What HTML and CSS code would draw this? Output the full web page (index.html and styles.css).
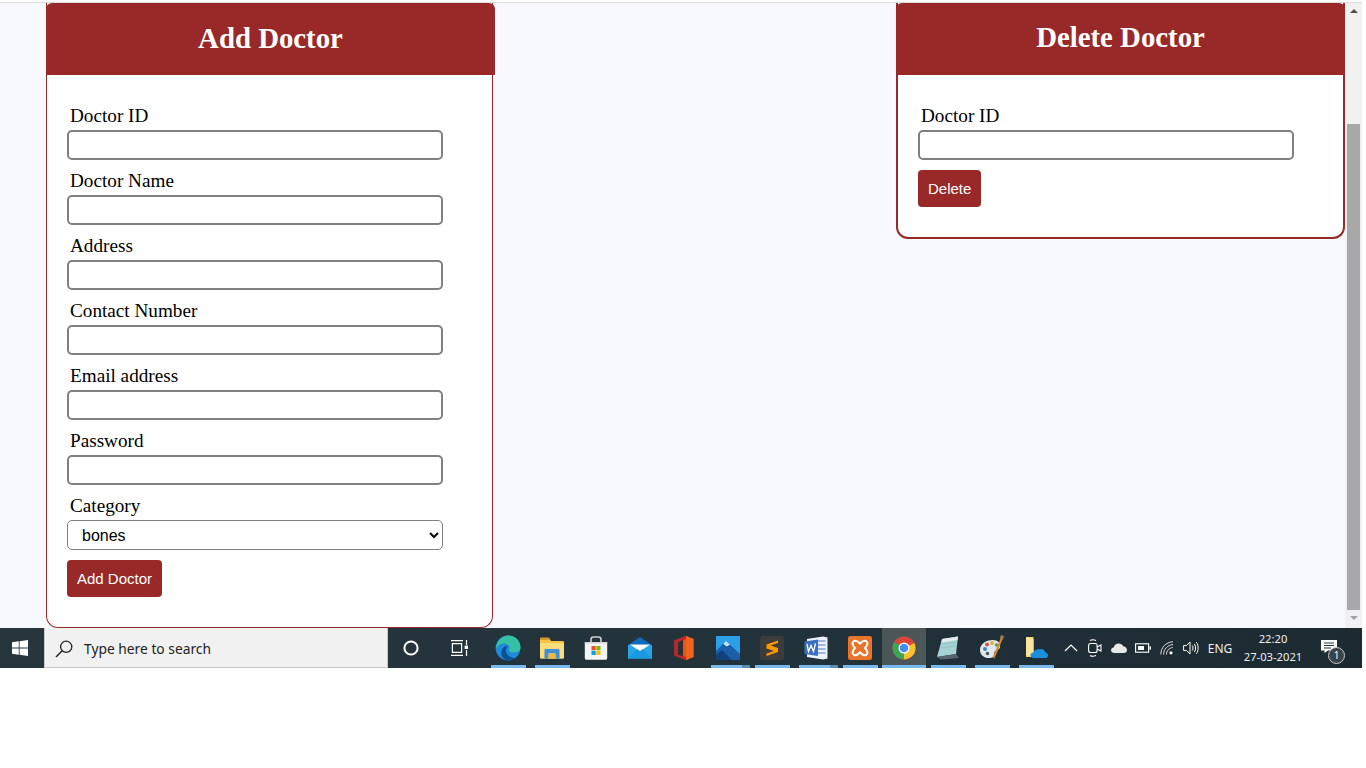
FILE: index.html
```html
<!DOCTYPE html>
<html lang="en">
<head>
<meta charset="UTF-8">
<meta name="viewport" content="width=device-width, initial-scale=1.0">
<title>Manage Doctors</title>
<link rel="stylesheet" href="styles.css">
</head>
<body>
<div class="screen">
    <div class="browser-line"></div>
    <div class="page">
        <div class="content">
            <div class="card card-add">
                <h1 class="card-title">Add Doctor</h1>
                <form class="card-form">
                    <label for="docId">Doctor ID</label>
                    <input type="text" id="docId">
                    <label for="docName">Doctor Name</label>
                    <input type="text" id="docName">
                    <label for="docAddress">Address</label>
                    <input type="text" id="docAddress">
                    <label for="docContact">Contact Number</label>
                    <input type="text" id="docContact">
                    <label for="docEmail">Email address</label>
                    <input type="text" id="docEmail">
                    <label for="docPass">Password</label>
                    <input type="text" id="docPass">
                    <label for="docCat">Category</label>
                    <select id="docCat">
                        <option>bones</option>
                    </select>
                    <button type="button" class="btn">Add Doctor</button>
                </form>
            </div>
            <div class="card card-delete">
                <h1 class="card-title">Delete Doctor</h1>
                <form class="card-form">
                    <label for="delId">Doctor ID</label>
                    <input type="text" id="delId">
                    <button type="button" class="btn">Delete</button>
                </form>
            </div>
        </div>
        <div class="scrollbar">
            <span class="arrow arrow-up"></span>
            <div class="thumb"></div>
            <span class="arrow arrow-down"></span>
        </div>
    </div>

    <div class="taskbar">
        <div class="start">
            <svg width="16" height="16" viewBox="0 0 16 16"><path fill="#fff" d="M0 2.3 6.8 1.3V7.6H0ZM7.6 1.2 16 0V7.6H7.6ZM0 8.4H6.8V14.7L0 13.7ZM7.6 8.4H16V16L7.6 14.8Z"/></svg>
        </div>
        <div class="search">
            <svg width="20" height="20" viewBox="0 0 20 20"><circle cx="12.2" cy="7.8" r="5.6" fill="none" stroke="#222" stroke-width="1.3"/><path d="M8.2 11.8 2 18" stroke="#222" stroke-width="1.4"/></svg>
            <span>Type here to search</span>
        </div>
        <div class="task-icons">
            <div class="task task-cortana">
                <svg width="16" height="16" viewBox="0 0 16 16"><circle cx="8" cy="8" r="6.6" fill="none" stroke="#fff" stroke-width="2"/></svg>
            </div>
            <div class="task task-view">
                <svg width="18" height="18" viewBox="0 0 18 18" fill="none" stroke="#fff" stroke-width="1.2"><path d="M1 1.6H13M1 16.4H13M2.4 4.6H11.6V13.4H2.4ZM16.5 1V6M16.5 11V17"/><rect x="14.6" y="6.6" width="3.4" height="3.4" fill="#fff" stroke="none"/></svg>
            </div>
            <div class="task open">
                <svg width="26" height="26" viewBox="0 0 26 26"><circle cx="13" cy="13" r="12.4" fill="#1f8ad8"/><path d="M1 14C1 7 6.5 .6 13.5 .6 20 .6 25.5 5.5 25.5 12.5 25.5 16 22 17.5 18.5 17.5 15 17.5 13.5 16 14.2 14.6 15.5 12.5 13.5 8.5 9.5 8.5 5 8.5 2 11 1 14Z" fill="#35c1a4"/><path d="M21 23C18.5 25 15.5 25.8 12.5 25.4 8 24.6 6 20.5 6.5 16.5 7 12.5 10.5 10.4 13 11.4 10.5 12.5 9.8 16.5 12.4 19.5 14.8 22.4 18.6 22.9 21 23Z" fill="#0f4f96"/></svg>
            </div>
            <div class="task open">
                <svg width="24" height="22" viewBox="0 0 24 22"><path d="M0 2.5C0 1.5.7 1 1.500 1H9L11 4H22.500C23.500 4 24 4.500 24 5.500V20C24 21 23.500 21.500 22.500 21.500H1.500C.5 21.500 0 21 0 20Z" fill="#f5c244"/><path d="M0 1.500C0 1 .5.500 1 .500H9L10.500 3H0Z" fill="#d39a2a"/><path d="M0 6H24V20C24 21 23.500 21.500 22.500 21.500H1.500C.5 21.500 0 21 0 20Z" fill="#fbdc7c"/><path d="M4.500 21.500V13.500C4.500 12.500 5 12 6 12H18C19 12 19.500 12.500 19.500 13.500V21.500H15.500V16.500H8.500V21.500Z" fill="#3e8fd6"/><rect x="8.500" y="16.500" width="7" height="5" fill="#f3b73c"/></svg>
            </div>
            <div class="task">
                <svg width="24" height="24" viewBox="0 0 24 24"><path d="M7 7V3.500C7 2 8 1 9.500 1H14.500C16 1 17 2 17 3.500V7" fill="none" stroke="#cfcfcf" stroke-width="1.6"/><path d="M.8 6H23.200V22C23.200 23 22.500 23.800 21.500 23.800H2.500C1.500 23.800.8 23 .8 22Z" fill="#f4f4f4"/><path d="M.8 6H23.200V7.500H.8Z" fill="#d5d5d5"/><rect x="7.500" y="10" width="4.200" height="4.200" fill="#f25022"/><rect x="12.300" y="10" width="4.200" height="4.200" fill="#7fba00"/><rect x="7.500" y="14.800" width="4.200" height="4.200" fill="#00a4ef"/><rect x="12.300" y="14.800" width="4.200" height="4.200" fill="#ffb900"/></svg>
            </div>
            <div class="task">
                <svg width="24" height="22" viewBox="0 0 24 22"><path d="M0 8 12 0 24 8V21.500H0Z" fill="#0f6cbd"/><path d="M0 8H24V21.500H0Z" fill="#27a7ea"/><path d="M2 7.500H22L12 14.500Z" fill="#f7fbfe"/><path d="M0 21.500 9 12 12 14 15 12 24 21.500Z" fill="#1a9ae0"/></svg>
            </div>
            <div class="task">
                <svg width="20" height="24" viewBox="0 0 20 24"><path d="M12 0 19.500 3V21L12 24 .5 19.500V4.500Z" fill="#e8541a"/><path d="M12 0 .5 4.500V19.500L12 24V21L4 19V5.500L12 3Z" fill="#c21f33"/><path d="M4 6 9 3.800V20.300L4 19Z" fill="#2a2f33"/><path d="M12 0V24L19.500 21V3Z" fill="#f0641e"/></svg>
            </div>
            <div class="task open split">
                <svg width="24" height="24" viewBox="0 0 24 24"><rect width="24" height="24" fill="#2ba0e8"/><path d="M0 24V15L10 5 24 18V24Z" fill="#1a5fa8"/><path d="M0 24V19L6 14 16 24Z" fill="#12417f"/><path d="M10 5 14 8.700 10.500 10.500 7.300 7.700Z" fill="#bfe6fb"/></svg>
            </div>
            <div class="task open">
                <svg width="24" height="24" viewBox="0 0 24 24"><rect width="24" height="24" rx="2.500" fill="#3c3c3c"/><path d="M18 4.500 6.500 8.500V12.500L14 15 6.500 17.500V20L18 16V12L10.500 9.500 18 7Z" fill="#ff9800"/></svg>
            </div>
            <div class="task open split">
                <svg width="24" height="24" viewBox="0 0 24 24"><path d="M3 3 19 .5 23.500 1.500V22.500L19 23.500 3 21Z" fill="#eef2f8"/><path d="M13 4H21.500V6H13ZM13 8H21.500V10H13ZM13 12H21.500V14H13ZM13 16H21.500V18H13Z" fill="#9db5da"/><path d="M.5 5.500 14 3.500V20L.5 18Z" fill="#3a70c0"/><path d="M3 8 4.500 15.500 7 9.500 9.500 15.500 11.500 7.500" fill="none" stroke="#fff" stroke-width="1.300"/></svg>
            </div>
            <div class="task open">
                <svg width="24" height="24" viewBox="0 0 24 24"><rect width="24" height="24" rx="2.500" fill="#e8752a"/><path d="M6 5C8 4 10 5.500 12 7.500 14 5.500 16 4 18 5 20.500 6.500 19.500 9.500 17 12 19.500 14.500 20.500 17.500 18 19 16 20 14 18.500 12 16.500 10 18.500 8 20 6 19 3.500 17.500 4.500 14.500 7 12 4.500 9.500 3.500 6.500 6 5Z" fill="none" stroke="#fff" stroke-width="2"/></svg>
            </div>
            <div class="task open active">
                <svg width="24" height="24" viewBox="0 0 24 24"><circle cx="12" cy="12" r="11.500" fill="#db4437"/><path d="M12 12 22.400 7A11.500 11.500 0 0 1 12 23.500Z" fill="#fbc02d"/><path d="M12 12 12 23.500A11.500 11.500 0 0 1 2.200 6Z" fill="#3aa757"/><circle cx="12" cy="12" r="5.500" fill="#fff"/><circle cx="12" cy="12" r="4.300" fill="#4a8af4"/></svg>
            </div>
            <div class="task open">
                <svg width="24" height="24" viewBox="0 0 24 24"><path d="M6 3 22 .5 20 18 1 21Z" fill="#a6d3d6"/><path d="M6 3 22 .5 21.500 4 5.500 6.500Z" fill="#e2eeee"/><path d="M1 21 20 18 23 22 5 23.500Z" fill="#56666c"/><path d="M6 8 20 6M5 12 20 10" stroke="#8bbcc0" stroke-width=".8"/></svg>
            </div>
            <div class="task open">
                <svg width="26" height="26" viewBox="0 0 26 26"><path d="M1 15C1 9 7 5 13.500 5 19 5 22 8.500 21 12 20 15.500 17 15 15.500 17 14 19.500 16.500 21 13 22.500 7 24.500 1 21 1 15Z" fill="#dfe8ee"/><circle cx="6" cy="14" r="2" fill="#3b82c4"/><circle cx="8" cy="9.500" r="1.900" fill="#e04a3f"/><circle cx="13" cy="8" r="1.900" fill="#e3b023"/><circle cx="17.500" cy="10" r="1.800" fill="#4ea64a"/><circle cx="8.500" cy="18.500" r="1.800" fill="#555"/><path d="M23.500 1.500 14.500 23" stroke="#e0882b" stroke-width="2"/><path d="M22 0 25 1.200 23.800 4.500 21 3.200Z" fill="#a37f55"/></svg>
            </div>
            <div class="task open">
                <svg width="24" height="24" viewBox="0 0 24 24"><path d="M2 1H9.500V21H2Z" fill="#f6cf5f"/><path d="M2 1 9.500 3V21L2 19Z" fill="#fbe59d"/><path d="M9.500 22C7.500 22 6.500 20.500 6.500 19 6.500 17.500 8 16.500 9.500 16.500 10.500 13.500 13.500 12.500 16 13.500 18 12.500 20.500 13.500 21 16 22.500 16.500 24 18 24 19.500 24 21 23 22 21.500 22Z" fill="#1a8fe0"/></svg>
            </div>
        </div>
        <div class="tray">
            <span class="tray-item tray-chevron">
                <svg width="14" height="8" viewBox="0 0 14 8"><path d="M1 7 7 1 13 7" fill="none" stroke="#fff" stroke-width="1.200"/></svg>
            </span>
            <span class="tray-item">
                <svg width="14" height="18" viewBox="0 0 14 18" fill="none" stroke="#fff" stroke-width="1.100"><rect x=".6" y="4.500" width="8.500" height="9" rx="2"/><path d="M9.200 8 13 6V12L9.200 10M2 1.500C3.500.6 6 .6 8 1.500M2 16.500C3.500 17.400 6 17.400 8 16.500"/></svg>
            </span>
            <span class="tray-item">
                <svg width="16" height="10" viewBox="0 0 16 10"><path d="M3.500 10C1.500 10 0 8.800 0 7.200 0 5.700 1.200 4.600 2.700 4.500 3.300 2 5.300.5 7.700.5 9.700.5 11.300 1.500 12.200 3.300 14.500 3.500 16 5.200 16 7 16 8.800 14.700 10 12.800 10Z" fill="#e8e8e8"/></svg>
            </span>
            <span class="tray-item">
                <svg width="16" height="10" viewBox="0 0 16 10" fill="none"><rect x=".6" y=".8" width="13" height="8.400" stroke="#fff" stroke-width="1.100"/><rect x="3" y="3" width="6" height="4" fill="#fff"/><rect x="14.500" y="3.400" width="1.500" height="3.200" fill="#fff"/></svg>
            </span>
            <span class="tray-item">
                <svg width="14" height="14" viewBox="0 0 14 14" fill="none" stroke="#ddd" stroke-width="1"><path d="M.8 13.500C.8 6.500 6 1 13 .8M3.600 13.500C3.600 8.200 7.800 3.800 13 3.600M6.400 13.500C6.400 10 9.200 6.800 12.800 6.500"/><circle cx="11" cy="11.800" r="1.600" fill="#fff" stroke="none"/></svg>
            </span>
            <span class="tray-item">
                <svg width="16" height="14" viewBox="0 0 16 14" fill="none" stroke="#fff" stroke-width="1"><path d="M.6 4.500H3.500L7 1V13L3.500 9.500H.6ZM9.300 4.500C10.300 6 10.300 8 9.300 9.500M11.300 3C13 5.200 13 8.800 11.300 11M13.300 1.200C15.800 4.400 15.800 9.600 13.300 12.800"/></svg>
            </span>
            <span class="tray-lang">ENG</span>
            <div class="clock">
                <div>22:20</div>
                <div>27-03-2021</div>
            </div>
            <div class="notify">
                <svg width="16" height="13" viewBox="0 0 16 13"><path d="M0 0H16V10.500H7L3.500 13V10.500H0Z" fill="#fff"/><path d="M3 3H13M3 5.500H13M3 8H10" stroke="#25343c" stroke-width="1"/></svg>
                <span class="badge">1</span>
            </div>
        </div>
    </div>
</div>
</body>
</html>
```

FILE: styles.css
```css
body {
    margin: 0;
    padding: 0;
    background-color: #fff;
    font-family: "Liberation Serif", serif;
}
.screen {
    width: 1362px;
    height: 668px;
    display: flex;
    flex-direction: column;
}
.browser-line {
    height: 1px;
    margin-top: 2px;
    background-color: #dcdcdc;
    margin-bottom: -1px;
}
.page {
    height: 625px;
    margin-top: 1px;
    display: flex;
    flex: none;
}
.content {
    flex: 1;
    display: flex;
    justify-content: space-between;
    align-items: flex-start;
    padding-left: 46px;
    background-color: #f8f9ff;
}
.card {
    box-sizing: border-box;
    background-color: #fff;
    border-style: solid;
    border-color: #992828;
    border-top: none;
    border-radius: 0 0 12px 12px;
}
.card-add {
    width: 447px;
    height: 625px;
    border-width: 0 1px 1px 1px;
}
.card-delete {
    width: 449px;
    height: 236px;
    border-width: 0 2px 2px 2px;
}
.card-title {
    margin: 0;
    height: 72px;
    line-height: 70px;
    text-align: center;
    font-size: 28.8px;
    font-weight: bold;
    color: #fff;
    background-color: #992828;
    border-radius: 6px 6px 0 0;
}
.card-add .card-title {
    margin: 0 -3px 0 -1px;
}
.card-delete .card-title {
    margin: 0 -2px;
    line-height: 68px;
}
.card-form {
    padding: 30px 20px 30px 20px;
}
.card-form label {
    display: block;
    height: 22px;
    line-height: 22px;
    margin-bottom: 3px;
    padding-left: 3px;
    font-size: 19.2px;
    color: #000;
}
.card-form input,
.card-form select {
    display: block;
    box-sizing: border-box;
    width: 376px;
    height: 30px;
    margin-bottom: 10px;
    background-color: #fff;
    border-radius: 5px;
}
.card-form input {
    border: 2px solid #808080;
    padding: 0 8px;
}
.card-form select {
    border: 1px solid #808080;
    padding-left: 10px;
    font-family: "Liberation Sans", Arial, sans-serif;
    font-size: 16px;
    color: #000;
}
.btn {
    display: block;
    height: 37px;
    padding: 0 10px;
    border: none;
    border-radius: 4px;
    background-color: #992828;
    color: #fff;
    font-family: "Liberation Sans", Arial, sans-serif;
    font-size: 15px;
    cursor: pointer;
}
.scrollbar {
    width: 17px;
    flex: none;
    display: flex;
    flex-direction: column;
    align-items: center;
    background-color: #f1f1f1;
}
.arrow {
    width: 0;
    height: 0;
    border-left: 4px solid transparent;
    border-right: 4px solid transparent;
}
.arrow-up {
    margin-top: 6px;
    border-bottom: 4px solid #505050;
}
.arrow-down {
    margin-top: 6px;
    border-top: 4px solid #a3a3a3;
}
.thumb {
    width: 13px;
    height: 486px;
    margin-top: 111px;
    background-color: #a8a8a8;
}
.taskbar {
    height: 40px;
    flex: none;
    display: flex;
    align-items: stretch;
    color: #fff;
    font-family: "Noto Sans", sans-serif;
    background: linear-gradient(to right, #27363d, #22323a 60%, #1c2a31);
}
.start {
    box-sizing: border-box;
    width: 44px;
    flex: none;
    display: flex;
    align-items: center;
    justify-content: center;
    padding-right: 4px;
}
.search {
    box-sizing: border-box;
    width: 344px;
    flex: none;
    display: flex;
    align-items: center;
    gap: 10px;
    padding: 2px 0 0 9px;
    background-color: #f1f1f1;
    border: 1px solid #c8c8c8;
    border-top: none;
    color: #222;
    font-size: 13.8px;
}
.task-icons {
    width: 669px;
    flex: none;
    display: flex;
}
.task {
    position: relative;
    width: 44px;
    flex: none;
    display: flex;
    align-items: center;
    justify-content: center;
}
.task-cortana {
    width: 46px;
}
.task-view {
    width: 50px;
    margin-right: 2px;
}
.task.open::after {
    content: "";
    position: absolute;
    left: 5px;
    right: 4px;
    bottom: 0;
    height: 3px;
    background-color: #76b9ed;
}
.task.split::after {
    right: 0;
    background: linear-gradient(to right, #76b9ed 80%, #5a8fb5 80%);
}
.task.active {
    background-color: #4b5659;
}
.task.active::after {
    left: 0;
    right: 0;
}
.tray {
    flex: 1;
    display: flex;
    align-items: center;
    padding-left: 2px;
    font-size: 12px;
}
.tray-item {
    width: 24px;
    flex: none;
    display: flex;
    align-items: center;
    justify-content: center;
}
.tray-lang {
    width: 34px;
    margin-left: 0;
    text-align: center;
    color: #f0f0f0;
}
.clock {
    width: 72px;
    text-align: center;
    font-size: 11.2px;
    line-height: 18px;
    color: #f0f0f0;
}
.notify {
    position: relative;
    margin-left: 12px;
    height: 19px;
    padding-top: 3px;
}
.notify svg {
    display: block;
}
.badge {
    position: absolute;
    left: 7px;
    top: 10px;
    box-sizing: border-box;
    width: 17px;
    height: 17px;
    border-radius: 50%;
    background-color: #39444a;
    border: 1px solid #c8c8c8;
    font-size: 10px;
    line-height: 15px;
    text-align: center;
}
```
